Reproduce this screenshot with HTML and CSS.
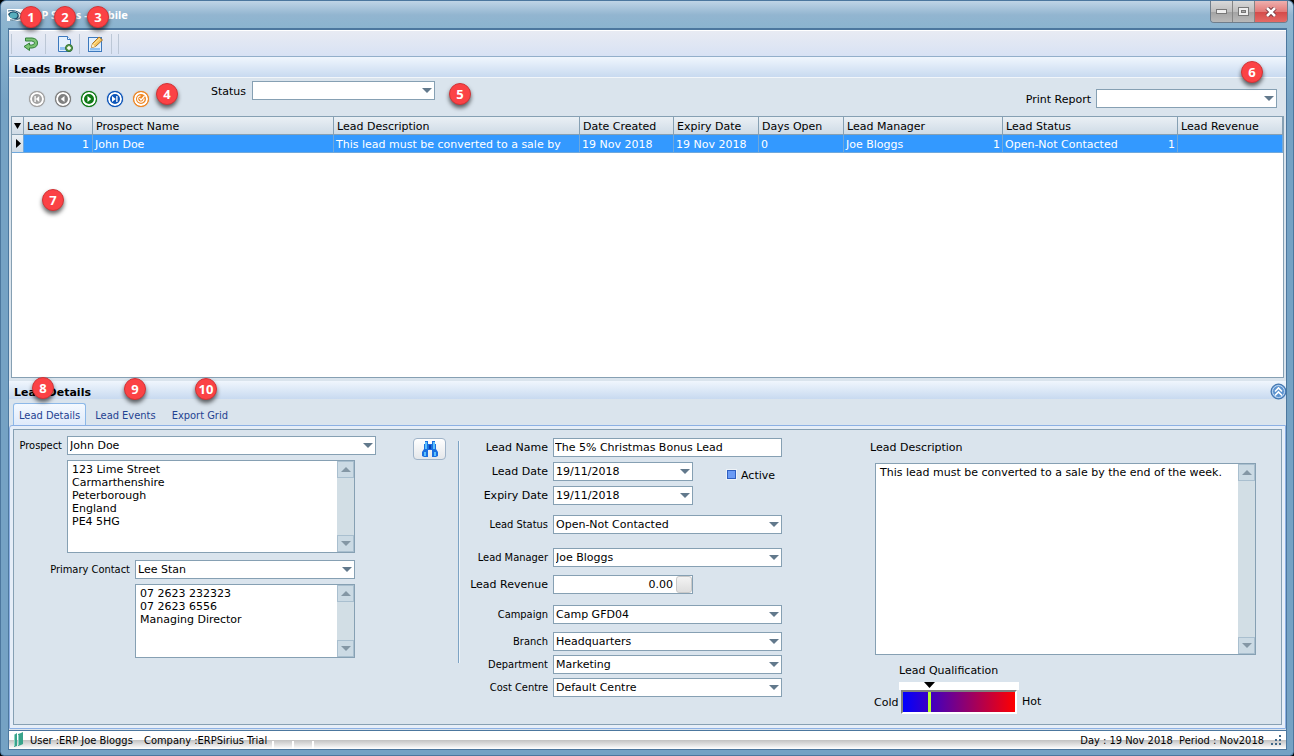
FILE: index.html
```html
<!DOCTYPE html>
<html lang="en">
<head>
<meta charset="utf-8">
<title>ERP Sirius - Mobile</title>
<link rel="stylesheet" href="styles.css">
</head>
<body>
<div class="window">
  <header class="titlebar">
    <svg class="app-icon" width="16" height="16" viewBox="0 0 16 16" aria-hidden="true"><rect y="2" width="16" height="12" fill="#fff"/><path d="M1 7Q5 2 11 6Q13 10 10 12Q3 13 1 7Z" fill="#1b4a66"/><ellipse cx="6.500" cy="8.500" rx="4" ry="3" fill="#57aebd"/><path d="M1 4Q9 2 15 8M3 13Q10 14 14 10" fill="none" stroke="#245a7c"/></svg>
    <h1 class="title">ERP Sirius - Mobile</h1>
    <div class="window-buttons">
      <button class="win-btn" aria-label="Minimize"><svg width="11" height="5"><rect x=".5" y=".5" width="10" height="4" fill="#eee" stroke="#777"/></svg></button>
      <button class="win-btn" aria-label="Maximize"><svg width="11" height="9"><rect x=".5" y=".5" width="10" height="8" fill="#eee" stroke="#777"/><rect x="3.500" y="3.500" width="4" height="2" fill="#aaa" stroke="#777"/></svg></button>
      <button class="win-btn win-close" aria-label="Close"><svg width="12" height="10" viewBox="0 0 12 10"><path d="M2 1L10 9M10 1L2 9" stroke="#7a3b42" stroke-width="4.500"/><path d="M2 1L10 9M10 1L2 9" stroke="#fff" stroke-width="2.600"/></svg></button>
    </div>
  </header>

  <main class="client">
    <nav class="toolbar" aria-label="Main">
      <button class="tool" aria-label="Back"><svg width="16" height="16" viewBox="0 0 16 16"><path d="M2.500 2H9Q14.500 2.500 14.500 7T9 12H6.500V14.500L1 10.500L6.500 7V9H8.500Q11.500 9 11.500 7T8.500 5H2.500Z" fill="#7cc473" stroke="#33803a"/></svg></button>
      <button class="tool" aria-label="New lead"><svg width="16" height="16" viewBox="0 0 16 16"><path d="M1.500.5H10.500L13.500 3.500V15.500H1.500Z" fill="#e3f0fd" stroke="#3c78bd"/><path d="M10.500.5V3.500H13.500" fill="#fff" stroke="#3c78bd"/><path d="M3 11H12V14H3Z" fill="#8fc1f2"/><circle cx="12" cy="12" r="3.500" fill="#5c9f51" stroke="#33702e"/><path d="M12 10V14M10 12H14" stroke="#fff" stroke-width="1.400"/></svg></button>
      <button class="tool" aria-label="Edit lead"><svg width="16" height="16" viewBox="0 0 16 16"><rect x=".5" y="1.500" width="13" height="14" fill="#e3f0fd" stroke="#3c78bd"/><path d="M2 12H12V14.500H2Z" fill="#8fc1f2"/><path d="M3.500 11.500L4.500 7.500L11 1L14.500 4L7.500 10.500Z" fill="#f6c45c" stroke="#a8752d"/><path d="M3.500 11.500L4.500 8L7 10.500Z" fill="#fff0cc"/><path d="M5.500 8.500L12 2.500" stroke="#fde9a9"/></svg></button>
      <span class="tool-sep"></span>
    </nav>
    <h2 class="section-title">Leads Browser</h2>

    <section class="filters">
      <div class="nav-buttons">
        <button class="nav-btn gray" aria-label="First"><svg width="6" height="6" viewBox="0 0 8 8"><path d="M1.500 0V8" stroke="#fff" stroke-width="1.800"/><path d="M7 0V8L2.500 4Z" fill="#fff"/></svg></button>
        <button class="nav-btn dim" aria-label="Previous"><svg width="6" height="6" viewBox="0 0 8 8"><path d="M6 0V8L1 4Z" fill="#fff"/></svg></button>
        <button class="nav-btn green" aria-label="Next"><svg width="6" height="6" viewBox="0 0 8 8"><path d="M2 0V8L7 4Z" fill="#fff"/></svg></button>
        <button class="nav-btn blue" aria-label="Last"><svg width="6" height="6" viewBox="0 0 8 8"><path d="M0 0V8L5 4Z" fill="#fff"/><path d="M6.500 0V8" stroke="#fff" stroke-width="1.800"/></svg></button>
        <button class="nav-btn orange" aria-label="Refresh"><svg width="8" height="8" viewBox="0 0 8 8"><path d="M7 3.500A3.200 3.200 0 1 1 3.500.8M2.500 3L4 5L7.500 1" fill="none" stroke="#fff" stroke-width="1.200"/></svg></button>
      </div>
      <label class="filter-label" for="status">Status</label>
      <span class="combo combo-filter status-combo"><select id="status"><option></option></select></span>
      <label class="filter-label print-label" for="report">Print Report</label>
      <span class="combo combo-filter report-combo"><select id="report"><option></option></select></span>
    </section>

    <section class="grid-box">
      <table class="leads">
        <colgroup><col class="c-mark"><col class="c-no"><col class="c-prospect"><col class="c-desc"><col class="c-created"><col class="c-expiry"><col class="c-days"><col class="c-manager"><col class="c-status"><col></colgroup>
        <thead><tr><th class="mark"><svg width="7" height="6"><path d="M0 0H7L3.500 6Z"/></svg></th><th>Lead No</th><th>Prospect Name</th><th>Lead Description</th><th>Date Created</th><th>Expiry Date</th><th>Days Open</th><th>Lead Manager</th><th>Lead Status</th><th>Lead Revenue</th></tr></thead>
        <tbody><tr><td class="mark"><svg width="5" height="9"><path d="M0 0V9L5 4.500Z"/></svg></td><td class="num">1</td><td>John Doe</td><td>This lead must be converted to a sale by</td><td>19 Nov 2018</td><td>19 Nov 2018</td><td>0</td><td><div class="pair"><span>Joe Bloggs</span><span>1</span></div></td><td><div class="pair"><span>Open-Not Contacted</span><span>1</span></div></td><td></td></tr></tbody>
      </table>
    </section>

    <div class="section-title details-title"><h2>Lead Details</h2>
      <button class="collapse" aria-label="Collapse"><svg width="17" height="17" viewBox="0 0 17 17"><circle cx="8.500" cy="8.500" r="7.500" fill="#5b92cf" stroke="#3c6fa8"/><circle cx="8.500" cy="8.500" r="6" fill="none" stroke="#c7dcf3"/><path d="M5 8.500L8.500 5L12 8.500M5 12.500L8.500 9L12 12.500" fill="none" stroke="#fff" stroke-width="1.600"/></svg></button>
    </div>

    <div class="tabs" role="tablist">
      <button class="tab active" role="tab">Lead Details</button>
      <button class="tab" role="tab">Lead Events</button>
      <button class="tab" role="tab">Export Grid</button>
    </div>

    <div class="tab-page">
      <form class="details">
        <div class="col-left">
          <div class="line">
            <label class="narrow" for="prospect">Prospect</label>
            <span class="combo w-prospect"><select id="prospect"><option>John Doe</option></select></span>
          </div>
          <div class="memo memo-address">
            <textarea aria-label="Address">123 Lime Street
Carmarthenshire
Peterborough
England
PE4 5HG</textarea>
            <div class="scroll"><button type="button" class="sb up" aria-label="Up"></button><button type="button" class="sb down" aria-label="Down"></button></div>
          </div>
          <div class="line contact-line">
            <label class="narrow" for="contact">Primary Contact</label>
            <span class="combo w-contact"><select id="contact"><option>Lee Stan</option></select></span>
          </div>
          <div class="memo memo-contact">
            <textarea aria-label="Contact details">07 2623 232323
07 2623 6556
Managing Director</textarea>
            <div class="scroll"><button type="button" class="sb up" aria-label="Up"></button><button type="button" class="sb down" aria-label="Down"></button></div>
          </div>
        </div>
        <button type="button" class="find" aria-label="Find prospect"><svg width="16" height="16" viewBox="0 0 16 16"><path d="M3 0H6V3H10V0H13V3H14V8L16 11V15L14 16H10V9H6V16H2L0 15V11L2 8V3H3Z" fill="#1a6fe0"/><path d="M4 1V8M12 1V8M3 11V15M13 11V15" stroke="#5cc0fc" stroke-width="2"/><path d="M7 4H9V8H7Z" fill="#0a3fae"/></svg></button>
        <div class="divider"></div>
        <div class="col-mid">
          <label for="name">Lead Name</label><input id="name" class="text" value="The 5% Christmas Bonus Lead">
          <label for="date">Lead Date</label>
          <div class="date-row"><span class="combo short"><select id="date"><option>19/11/2018</option></select></span>
            <label class="check"><input type="checkbox" checked>Active</label></div>
          <label for="expiry">Expiry Date</label><span class="combo short"><select id="expiry"><option>19/11/2018</option></select></span>
          <label class="narrow" for="lstatus">Lead Status</label><span class="combo"><select id="lstatus"><option>Open-Not Contacted</option></select></span>
          <label class="narrow" for="manager">Lead Manager</label><span class="combo"><select id="manager"><option>Joe Bloggs</option></select></span>
          <label for="revenue">Lead Revenue</label>
          <div class="money"><input id="revenue" value="0.00"><button type="button" class="calc" aria-label="Calculator"></button></div>
          <label class="narrow" for="campaign">Campaign</label><span class="combo"><select id="campaign"><option>Camp GFD04</option></select></span>
          <label class="narrow" for="branch">Branch</label><span class="combo"><select id="branch"><option>Headquarters</option></select></span>
          <label class="narrow" for="dept">Department</label><span class="combo"><select id="dept"><option>Marketing</option></select></span>
          <label class="narrow" for="cost">Cost Centre</label><span class="combo"><select id="cost"><option>Default Centre</option></select></span>
        </div>
        <div class="col-right">
          <label for="desc">Lead Description</label>
          <div class="memo memo-desc">
            <textarea id="desc">This lead must be converted to a sale by the end of the week.</textarea>
            <div class="scroll"><button type="button" class="sb up" aria-label="Up"></button><button type="button" class="sb down" aria-label="Down"></button></div>
          </div>
          <div class="qualify">
            <span class="qualify-title">Lead Qualification</span>
            <span class="cold">Cold</span>
            <div class="gauge">
              <div class="gauge-track"><svg class="pointer" width="11" height="6"><path d="M0 0H11L5.500 6Z"/></svg></div>
              <div class="gauge-bar"><span class="gauge-mark"></span></div>
            </div>
            <span class="hot">Hot</span>
          </div>
        </div>
      </form>
    </div>

    <footer class="status">
      <svg width="12" height="16" viewBox="0 0 12 16" aria-hidden="true"><path d="M1 3L4 1V14L1 15ZM5 2L8 1V13L5 14ZM8 1L10 0V12L8 13Z" fill="#38a38b"/><path d="M1.500 3V14M5.500 3V13" stroke="#8ad4c2"/></svg>
      <span class="user">User :ERP Joe Bloggs</span>
      <span class="company">Company :ERPSirius Trial</span>
      <span class="cell"></span><span class="cell"></span><span class="cell"></span>
      <span class="period">Day : 19 Nov 2018&nbsp; Period : Nov2018</span>
      <svg width="12" height="12" viewBox="0 0 12 12" aria-hidden="true"><path d="M8 1h2v2h-2zM8 5h2v2h-2zM8 9h2v2h-2zM4 5h2v2h-2zM4 9h2v2h-2zM0 9h2v2h-2z" fill="#3f6788"/></svg>
    </footer>
  </main>

  <div class="callouts">
    <b class="callout n1">1</b><b class="callout n2">2</b><b class="callout n3">3</b><b class="callout n4">4</b><b class="callout n5">5</b>
    <b class="callout n6">6</b><b class="callout n7">7</b><b class="callout n8">8</b><b class="callout n9">9</b><b class="callout n10">10</b>
  </div>
</div>
</body>
</html>
```
FILE: styles.css
```css
* { box-sizing: border-box; }
body { margin: 0; font: 11px/13px "DejaVu Sans", Verdana, sans-serif; color: #000; background: #000; }
button, input, select, textarea { font: inherit; color: inherit; margin: 0; border-radius: 0; }
button { padding: 0; border: 0; background: none; }
h1, h2 { margin: 0; font-size: 11px; }
svg { display: block; }

.window {
  position: relative; display: flex; flex-direction: column; min-height: 100vh;
  padding: 0 6px 5px 7px; border: 1px solid #4c779e; border-radius: 6px 6px 4px 4px;
  background: linear-gradient(#bfd4e6 0, #92b5d0 14px, #8ab4cf 28px, #75a2c4 100px);
}
.titlebar { display: flex; align-items: flex-start; height: 27px; }
.app-icon { margin: 6px 0 0 -1px; }
.title { flex: 1; padding: 7px 0 0 5px; font: bold 12px/14px "Noto Sans", sans-serif; font-size: 11px; color: #fff; }
.window-buttons { display: flex; margin-right: -1px; border: 1px solid #6f7e8c; border-top: 0; border-radius: 0 0 4px 4px; overflow: hidden; }
.win-btn { display: grid; place-items: center; width: 22px; height: 21px; border-right: 1px solid #858585; background: linear-gradient(#d9d9d9, #bdbdbd 50%, #a3a3a3 52%, #b9b9b9); }
.win-close { width: 32px; border: 0; background: linear-gradient(#eeb0ae, #e37b79 50%, #d44a49 52%, #e46a66); }

.client { display: flex; flex-direction: column; flex: 1; border: 1px solid #4c779e; border-top-width: 2px; background: #dae4ed; }
.toolbar { display: flex; align-items: center; height: 27px; padding-left: 2px; border-top: 1px solid #fff; border-bottom: 1px solid #93afca; background: linear-gradient(#e8ebf3, #d8e2f4); }
.tool { display: grid; place-items: center; width: 34px; height: 20px; padding-left: 4px; border-left: 1px solid #bcc7d6; }
.tool:nth-child(3) { width: 32px; padding: 0; }
.tool-sep { width: 8px; height: 20px; border: 1px solid #bcc7d6; border-width: 0 1px; }
.section-title { flex: none; height: 20px; padding: 6px 5px 0; font-weight: bold; background: linear-gradient(#f0f6fd, #c8daf0); }
.filters { display: flex; height: 39px; padding-top: 3px; border-top: 1px solid #f2f6fa; }
.nav-buttons { display: flex; gap: 10px; padding: 10px 0 0 20px; }
.nav-btn { display: grid; place-items: center; width: 16px; height: 16px; border: 1px solid; border-radius: 50%; background: currentColor; box-shadow: inset 0 0 0 2px #fff, 0 0 1px currentColor; }
.nav-btn svg { margin: auto; }
.gray { color: #a2a2a2; } .dim { color: #808080; } .green { color: #0f7a16; } .blue { color: #0d55b8; } .orange { color: #ee8724; }
.filter-label { padding: 4px 5px 0 0; }
.nav-buttons + .filter-label { margin-left: 62px; }
.status-combo { margin-left: 1px; }
.print-label { margin: 8px 0 0 auto; }
.report-combo { margin: 8px 9px 0 0; }

.combo { position: relative; display: block; height: 19px; }
.combo::after { content: ""; position: absolute; right: 3px; top: 7px; border: 5px solid transparent; border-top-color: #62798c; border-bottom: 0; pointer-events: none; }
.combo select { display: block; width: 100%; height: 19px; padding: 0 16px 0 2px; border: 1px solid #86a0b3; background: #fff; appearance: none; }
.combo-filter { width: 183px; flex: none; }
.report-combo { width: 181px; }

.grid-box { flex: 1; min-height: 120px; margin: 0 2px; border: 1px solid #86a0b3; background: #fff; }
.leads { width: 100%; table-layout: fixed; border-collapse: separate; border-spacing: 0; }
.leads th, .leads td { height: 18px; padding: 1px 2px 0; border: 1px solid #86a0b3; border-width: 0 1px 1px 0; text-align: left; font-weight: normal; white-space: nowrap; overflow: hidden; }
.leads th { padding-left: 3px; background: linear-gradient(#eaf0f5, #cfdbe6); }
.leads td { color: #fff; background: #39f; border-color: #6fa8dc; }
.leads .mark { padding: 0 0 0 2px; background: linear-gradient(#eaf0f5, #cfdbe6); }
.leads td.mark { padding-left: 4px; }
.leads .num { padding-right: 3px; text-align: right; }
.pair { display: flex; justify-content: space-between; }
.c-mark { width: 12px; } .c-no { width: 69px; } .c-prospect { width: 241px; } .c-desc { width: 246px; }
.c-created { width: 94px; } .c-expiry { width: 85px; } .c-days { width: 85px; } .c-manager { width: 159px; } .c-status { width: 175px; }

.details-title { position: relative; height: 18px; margin-top: 3px; padding-top: 5px; }
.collapse { position: absolute; right: -1px; top: 2px; }
.tabs { display: flex; padding: 4px 4px 0; }
.tab { height: 22px; padding: 2px 5px 0; margin-right: 6px; color: #1f4291; font: 11px/13px "DejaVu Sans Condensed", "DejaVu Sans", sans-serif; }
.tab.active { margin-right: 4px; margin-bottom: -1px; border: 1px solid #8cb8e8; border-bottom: 0; border-radius: 3px 3px 0 0; background: linear-gradient(#f4f9ff, #dfeafa); }
.tab-page { margin: 0 0 1px; padding: 3px; border: 1px solid #8cb0e4; border-radius: 3px 0 0 0; background: #e6eef8; }
.details { display: flex; min-height: 296px; padding: 6px 25px 0 5px; border: 1px solid #86a0b3; background: #dae4ed; }
.narrow { font: 11px/13px "DejaVu Sans Condensed", "DejaVu Sans", sans-serif; }
.col-left { width: 357px; display: flex; flex-direction: column; }
.w-prospect { width: 309px; } .w-contact { width: 220px; }
.line { display: flex; align-items: center; gap: 5px; width: 357px; }
.line .narrow { flex: 1; text-align: right; }
.contact-line { width: 336px; margin-top: 7px; }
.memo { display: flex; border: 1px solid #86a0b3; background: #fff; }
.memo textarea { flex: 1; min-width: 0; padding: 2px 4px; border: 0; resize: none; overflow: hidden; background: none; }
.scroll { display: flex; flex-direction: column; justify-content: space-between; width: 17px; background: #d2dee5; }
.sb { display: grid; place-items: center; height: 17px; border: 1px solid #a9bfcf; background: #cbdae4; }
.sb::after { content: ""; border: 5px solid transparent; border-top: 0; border-bottom-color: #8497a5; }
.down::after { border-top: 5px solid #8497a5; border-bottom: 0; }
.memo-address { width: 288px; height: 93px; margin: 5px 0 0 48px; }
.memo-contact { width: 220px; height: 74px; margin: 5px 0 0 116px; }
.find { display: grid; place-items: center; width: 33px; height: 22px; margin: 2px 12px 0 37px; border: 1px solid #9fb3c8; border-radius: 4px; background: linear-gradient(#fff, #e4e7ea); }
.divider { width: 2px; height: 222px; margin-top: 5px; border-left: 1px solid #7da3c4; border-right: 1px solid #eef4fa; }
.col-mid { display: grid; grid-template-columns: 88px 229px; grid-template-rows: 20px 20px 25px 29px 23px 26px 23px 19px 19px 19px; gap: 4px 5px; align-content: start; padding-top: 2px; }
.col-mid > label { padding-top: 3px; text-align: right; }
.text { height: 19px; padding: 0 1px; border: 1px solid #86a0b3; background: #fff; }
.short { width: 140px; }
.date-row { display: flex; gap: 34px; }
.check { display: flex; align-items: flex-start; gap: 5px; padding-top: 7px; }
.check input { appearance: none; width: 9px; height: 9px; margin-top: 1px; border: 1px solid #2f5fc0; outline: 1px solid #eef3f8; background: #6b9bf5; }
.money { display: flex; width: 140px; height: 19px; border: 1px solid #86a0b3; background: #fff; }
.money input { flex: 1; min-width: 0; padding: 0 3px; border: 0; background: none; text-align: right; }
.calc { width: 16px; border: 1px solid #c9c9c9; border-radius: 3px; background: linear-gradient(#f3f3f3, #dedede); }
.col-right { flex: 1; padding-left: 88px; }
.col-right > label { display: block; padding-top: 5px; }
.memo-desc { height: 192px; margin: 9px 0 0 5px; }
.qualify { display: grid; grid-template-columns: 28px 116px auto; margin: 9px 0 0 5px; justify-content: start; align-items: start; }
.qualify-title { grid-column: 2 / 4; margin-bottom: 5px; }
.qualify-title, .gauge { margin-left: -4px; }
.cold { padding-top: 14px; margin-left: -1px; }
.hot { padding: 13px 0 0 3px; }
.gauge-track { height: 8px; padding-left: 25px; background: #fff; }
.gauge-bar { width: 116px; height: 24px; margin-left: 2px; border: 2px solid #808080; border-color: #808080 #fff #fff #808080; background: linear-gradient(90deg, #00f, #f00); }
.gauge-mark { display: block; width: 3px; height: 100%; margin-left: 25px; background: #b9ff2f; }

.status { display: flex; align-items: center; height: 19px; padding: 0 3px 0 4px; border-top: 1px solid #4c779e; background: linear-gradient(#fff 50%, #c4c4c4 52%, #fff); font: 11px/13px "DejaVu Sans Condensed", "DejaVu Sans", sans-serif; }
.user { width: 112px; margin-left: 5px; white-space: nowrap; }
.company { width: 128px; margin-left: 2px; white-space: nowrap; }
.cell { width: 20px; height: 8px; margin-top: 9px; border-left: 2px solid #fff; }
.period { margin: 0 7px 0 auto; }

.callouts { position: absolute; left: 0; top: 0; width: 100%; pointer-events: none; }
.callout { position: absolute; width: 22px; height: 22px; border: 1px solid #d23336; border-radius: 50%; background: #fb4245; color: #fff; font: bold 13px/20px "Open Sans", sans-serif; text-align: center; box-shadow: 0 3px 4px #0009; }
.n1 { left: 19px; top: 5px; } .n2 { left: 53px; top: 5px; } .n3 { left: 86px; top: 5px; }
.n4 { left: 155px; top: 82px; } .n5 { left: 448px; top: 82px; } .n6 { right: 30px; top: 60px; }
.n7 { left: 41px; top: 188px; } .n8 { left: 31px; top: 376px; } .n9 { left: 123px; top: 377px; } .n10 { left: 194px; top: 377px; }
```
